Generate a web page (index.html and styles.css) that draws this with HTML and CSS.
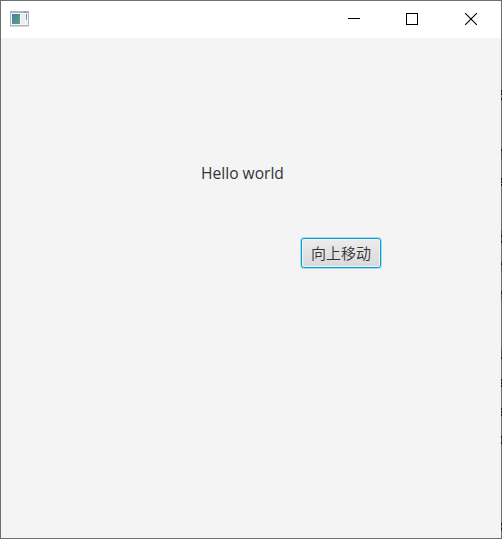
FILE: index.html
```html
<!DOCTYPE html>
<html lang="zh-CN">
<head>
<meta charset="utf-8">
<title>Hello world</title>
<link rel="stylesheet" href="styles.css">
</head>
<body>
<div class="window">
  <header class="titlebar">
    <svg class="app-icon" width="19" height="16" viewBox="0 0 19 16" shape-rendering="crispEdges">
      <defs>
        <linearGradient id="pane" x1="0" y1="0" x2="1" y2="1"><stop offset="0" stop-color="#4b78ac"/><stop offset="1" stop-color="#58a87c"/></linearGradient>
        <linearGradient id="bar" x1="0" y1="0" x2="0" y2="1"><stop offset="0" stop-color="#477bc5"/><stop offset="1" stop-color="#62b28a"/></linearGradient>
      </defs>
      <rect y="1" width="19" height="14" fill="#b0b5ba"/>
      <rect width="19" height="2" fill="#b0b5ba"/>
      <rect y="15" width="19" height="1" fill="#d5d7d9"/>
      <rect x="1" y="2" width="17" height="12" fill="#f7f8f9"/>
      <rect x="13" y="1" width="5" height="1" fill="#8f9498"/>
      <rect x="2" y="3" width="8" height="10" fill="url(#pane)"/>
      <rect x="11" y="3" width="4" height="10" fill="#ececec"/>
      <rect x="16" y="3" width="1" height="6" fill="url(#bar)"/>
      <rect x="16" y="10" width="2" height="3" fill="#eeeeee"/>
    </svg>
    <div class="controls">
      <svg width="12" height="12" shape-rendering="crispEdges"><path d="M0 5.5h12" stroke="#000"/></svg>
      <svg width="12" height="12" shape-rendering="crispEdges"><rect x=".5" y=".5" width="11" height="11" fill="none" stroke="#000"/></svg>
      <svg class="close" width="12" height="12"><path d="M0 0l12 12M12 0L0 12" stroke="#000" stroke-width="1.1"/></svg>
    </div>
  </header>
  <main class="content">
    <div class="label">Hello world</div>
    <button class="button">向上移动</button>
  </main>
  <svg class="edge" width="1" height="539" shape-rendering="crispEdges">
    <path d="M.5 149v10M.5 230v13M.5 349v8M.5 435v10M.5 523v8" stroke="#405866"/>
    <path d="M.5 261v11M.5 290v11" stroke="#66502c"/>
    <path d="M.5 90v2M.5 93v2M.5 98v2M.5 149v2M.5 178v2M.5 181v2M.5 184v2M.5 235v2M.5 241v2M.5 263v2M.5 292v2M.5 357v2M.5 379v2M.5 382v2M.5 385v2M.5 408v2M.5 411v2M.5 414v2M.5 436v2M.5 442v2M.5 523v2M.5 528v2" stroke="#151719"/>
  </svg>
</div>
</body>
</html>
```
FILE: styles.css
```css
* { box-sizing: border-box; }
body { margin: 0; overflow: hidden; }
.window {
  position: relative;
  display: flex;
  flex-direction: column;
  width: 502px;
  height: 539px;
  border: 1px solid #6f6e6f;
  background: #f4f4f4;
  font-family: "Noto Sans", "Noto Sans CJK SC", sans-serif;
}
.titlebar {
  display: flex;
  justify-content: space-between;
  height: 37px;
  padding: 10px 24px 0 9px;
  background: #fff;
}
.app-icon { display: block; }
.controls { display: flex; gap: 46px; padding-top: 2px; }
.controls svg { display: block; }
.controls .close { margin-left: 1px; }
.content {
  display: flex;
  flex-direction: column;
  align-items: flex-start;
  padding: 125px 0 0 200px;
}
.label {
  height: 21px;
  color: #333;
  font-family: "Open Sans", sans-serif;
  font-size: 15.6px;
  line-height: 21px;
  white-space: nowrap;
}
.button {
  width: 80px;
  height: 30px;
  margin: 54px 0 0 100px;
  padding: 0 0 1px;
  border: 1px solid #039ed3;
  border-radius: 3px;
  background: linear-gradient(#ececec, #d9d9d9);
  box-shadow: 0 0 0 1px #a5dcee, inset 0 0 0 1px #f5f5f5;
  color: #333;
  font-family: "Noto Sans CJK SC", sans-serif;
  font-size: 15px;
  font-weight: 350;
  line-height: 26px;
}
.edge { position: absolute; top: -1px; right: -1px; }
```
